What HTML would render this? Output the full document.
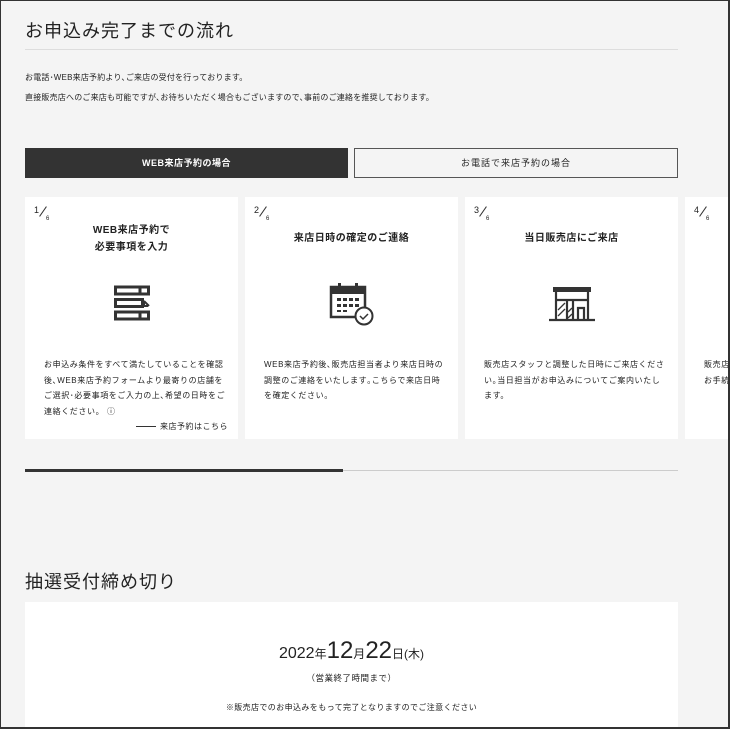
<!DOCTYPE html>
<html><head><meta charset="utf-8"><style>
*{margin:0;padding:0;box-sizing:border-box}
html,body{width:730px;height:729px;overflow:hidden}
body{background:#f4f4f4;font-family:"Liberation Sans","Noto Sans CJK JP",sans-serif;color:#222;position:relative}
.wrap{position:absolute;left:0;top:0;width:730px;height:729px;overflow:hidden}
.frame{position:absolute;left:0;top:0;width:730px;height:729px;border:1px solid #333;border-right:2px solid #333;border-bottom:2px solid #333;pointer-events:none;z-index:9}
.a{position:absolute}
h2{position:absolute;left:25px;font-size:18px;font-weight:normal;letter-spacing:1px;color:#222}
.p{font-size:8px;color:#222;left:25px;letter-spacing:0.2px}
.card{position:absolute;top:197px;width:213px;height:242px;background:#fff;overflow:hidden}
.num{position:absolute;left:9px;top:8px;font-size:9px}
.num i{position:absolute;left:3px;top:6px;width:12px;height:1px;background:#333;transform:rotate(-55deg)}
.num b{position:absolute;left:12px;top:11px;font-size:6px;font-weight:normal}
.ct{position:absolute;left:0;right:0;text-align:center;font-size:10px;font-weight:bold;line-height:17px;letter-spacing:0.5px}
.cd{position:absolute;left:19px;right:10px;top:160px;font-size:8px;line-height:15.5px;letter-spacing:0.6px}
.ic{position:absolute;left:50%;transform:translateX(-50%);top:88px}
</style></head><body>
<div class="wrap">
<h2 style="top:17px">お申込み完了までの流れ</h2>
<div class="a" style="left:25px;top:49px;width:653px;height:1px;background:#ddd"></div>
<div class="a p" style="top:72px">お電話･WEB来店予約より､ご来店の受付を行っております。</div>
<div class="a p" style="top:92px">直接販売店へのご来店も可能ですが､お待ちいただく場合もございますので､事前のご連絡を推奨しております。</div>
<div class="a" style="left:25px;top:148px;width:323px;height:30px;background:#333;color:#fff;font-size:9px;font-weight:bold;text-align:center;line-height:30px;letter-spacing:0.5px">WEB来店予約の場合</div>
<div class="a" style="left:354px;top:148px;width:324px;height:30px;border:1px solid #555;font-size:9px;text-align:center;line-height:28px;letter-spacing:1px">お電話で来店予約の場合</div>

<div class="card" style="left:25px">
<div class="num">1<i></i><b>6</b></div>
<div class="ct" style="top:25px">WEB来店予約で<br>必要事項を入力</div>
<svg class="ic" width="36" height="36" viewBox="0 0 36 36" fill="none" stroke="#333" stroke-width="3"><rect x="1.5" y="2" width="33" height="7"/><rect x="1.5" y="14.5" width="27" height="7"/><rect x="1.5" y="27" width="33" height="7"/><line x1="26" y1="2" x2="26" y2="9"/><line x1="26" y1="27" x2="26" y2="34"/><path d="M30 16l5 5M30 16v5h4" stroke-width="2"/></svg>
<div class="cd">お申込み条件をすべて満たしていることを確認後､WEB来店予約フォームより最寄りの店舗をご選択･必要事項をご入力の上､希望の日時をご連絡ください。 ⓘ</div>
<div class="a" style="right:10px;top:224px;font-size:8px;letter-spacing:0.5px"><span style="display:inline-block;width:20px;height:1px;background:#333;vertical-align:middle;margin-right:4px"></span>来店予約はこちら</div>
</div>

<div class="card" style="left:245px">
<div class="num">2<i></i><b>6</b></div>
<div class="ct" style="top:33px">来店日時の確定のご連絡</div>
<svg class="ic" width="46" height="46" viewBox="0 0 46 46" style="top:84px"><rect x="2" y="6" width="34" height="30" fill="#fff" stroke="#333" stroke-width="2.5"/><rect x="2" y="6" width="34" height="7" fill="#333"/><rect x="9" y="2" width="3" height="7" fill="#333"/><rect x="26" y="2" width="3" height="7" fill="#333"/><g fill="#333"><rect x="8" y="17" width="4" height="3"/><rect x="14" y="17" width="4" height="3"/><rect x="20" y="17" width="4" height="3"/><rect x="26" y="17" width="4" height="3"/><rect x="8" y="23" width="4" height="3"/><rect x="14" y="23" width="4" height="3"/><rect x="20" y="23" width="4" height="3"/><rect x="26" y="23" width="4" height="3"/><rect x="8" y="29" width="4" height="2"/><rect x="14" y="29" width="4" height="2"/></g><circle cx="35" cy="35" r="8.5" fill="#fff" stroke="#333" stroke-width="2"/><path d="M31 35l3 3 5-5" fill="none" stroke="#333" stroke-width="1.5"/></svg>
<div class="cd">WEB来店予約後､販売店担当者より来店日時の調整のご連絡をいたします｡こちらで来店日時を確定ください。</div>
</div>

<div class="card" style="left:465px">
<div class="num">3<i></i><b>6</b></div>
<div class="ct" style="top:33px">当日販売店にご来店</div>
<svg class="ic" width="46" height="36" viewBox="0 0 46 36" style="top:90px"><rect x="4" y="0" width="38" height="5" fill="#333"/><g stroke="#333" stroke-width="2.2" fill="none"><line x1="0" y1="33" x2="46" y2="33"/><line x1="7" y1="5" x2="7" y2="33"/><line x1="39" y1="5" x2="39" y2="33"/><line x1="7" y1="13" x2="39" y2="13"/><line x1="18" y1="13" x2="18" y2="33"/><line x1="24" y1="13" x2="24" y2="33"/><path d="M29 33V21h6v12"/><path d="M9 23l7-7M9 29l7-7M19 25l4-4M19 31l4-4" stroke-width="1.3"/></g></svg>
<div class="cd">販売店スタッフと調整した日時にご来店ください｡当日担当がお申込みについてご案内いたします。</div>
</div>

<div class="card" style="left:685px;width:45px">
<div class="num">4<i></i><b>6</b></div>
<div class="cd" style="width:180px;right:auto">販売店スタッフがお申込み条件を確認のうえ､お手続きいたします。</div>
</div>

<div class="a" style="left:25px;top:470px;width:653px;height:1px;background:#ccc"></div>
<div class="a" style="left:25px;top:469px;width:318px;height:3px;background:#333"></div>

<h2 style="top:568px">抽選受付締め切り</h2>
<div class="a" style="left:25px;top:602px;width:653px;height:130px;background:#fff">
<div class="a" style="left:0;right:0;top:35px;text-align:center;font-size:16px;color:#222">2022<span style="font-size:12px">年</span><span style="font-size:24px">12</span><span style="font-size:12px">月</span><span style="font-size:24px">22</span><span style="font-size:12px">日(木)</span></div>
<div class="a" style="left:0;right:0;top:70px;text-align:center;font-size:8.5px;letter-spacing:0.5px">（営業終了時間まで）</div>
<div class="a" style="left:0;right:0;top:100px;text-align:center;font-size:8px;letter-spacing:0.4px">※販売店でのお申込みをもって完了となりますのでご注意ください</div>
</div>
</div>
<div class="frame"></div>
</body></html>
